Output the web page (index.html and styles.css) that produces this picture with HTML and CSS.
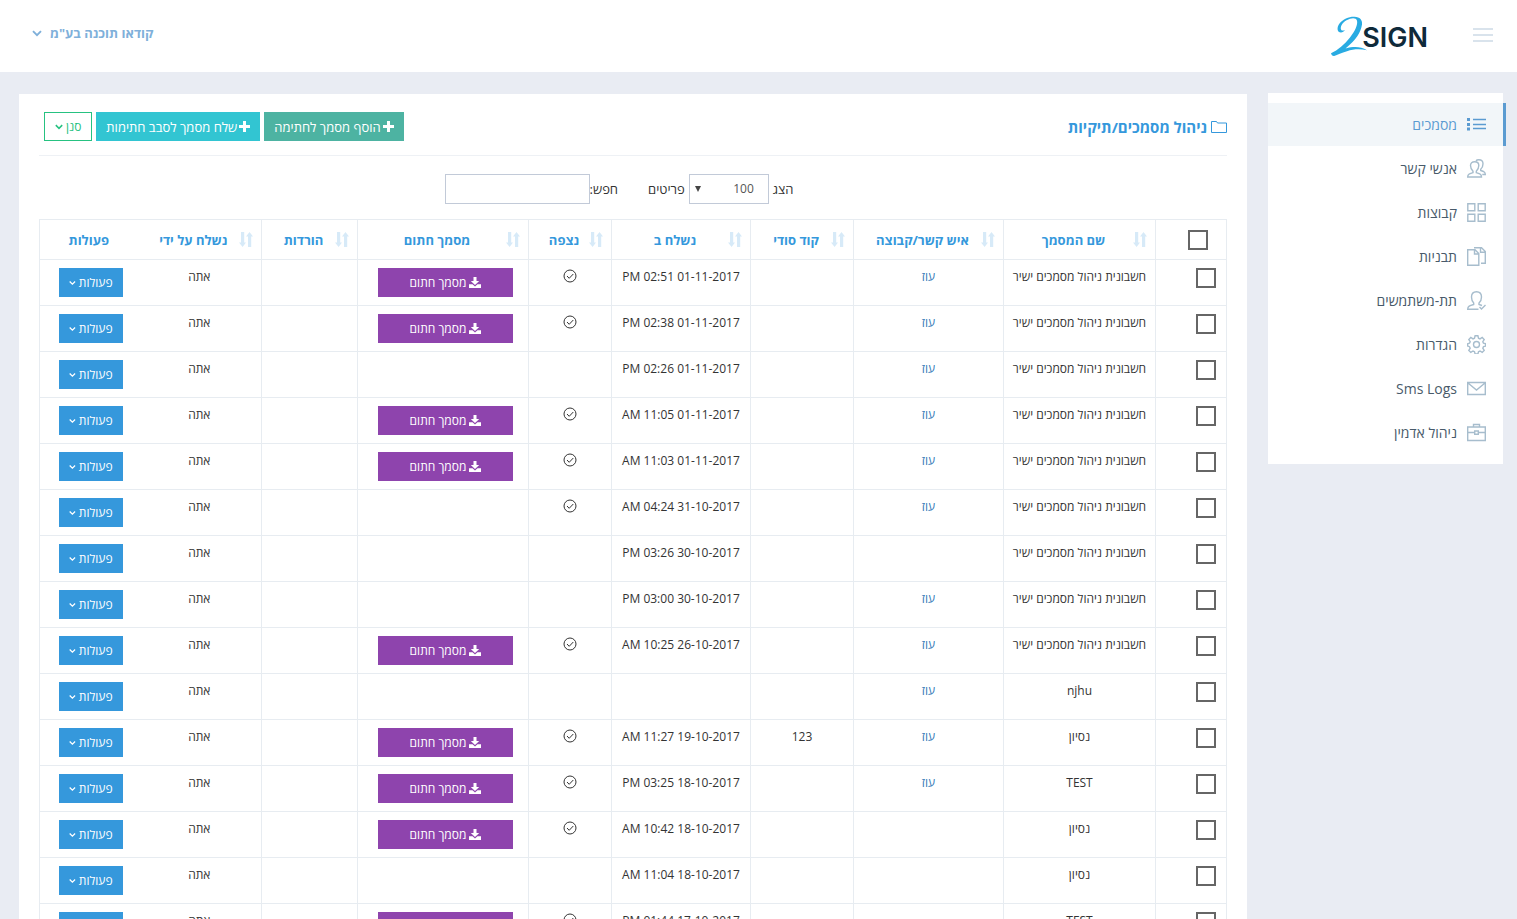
FILE: index.html
```html
<!DOCTYPE html>
<html lang="he" dir="rtl">
<head>
<meta charset="utf-8">
<title>2SIGN</title>
<link rel="stylesheet" href="styles.css">
</head>
<body>
<svg class="sprite" aria-hidden="true">
  <symbol id="i-sort" viewBox="0 0 14 15"><path d="M2 0h3.200v10.500H7L3.600 15 0 10.500h2zM9 15h3.200V4.500H14L10.500 0 7 4.500h2z"/></symbol>
  <symbol id="i-chev" viewBox="0 0 10 7"><path d="M1 1.200 5 5.200l4-4" fill="none" stroke="currentColor" stroke-width="1.900"/></symbol>
  <symbol id="i-plus" viewBox="0 0 11 11"><path d="M4 0h3v4h4v3H7v4H4V7H0V4h4z"/></symbol>
  <symbol id="i-down" viewBox="0 0 12 11"><path d="M4.500 0h3v4h2.700L6 8 1.800 4h2.700zM0 7.200h3.500L6 9.500l2.500-2.300H12V11H0z"/></symbol>
  <symbol id="i-check" viewBox="0 0 14 14"><g fill="none" stroke="currentColor"><circle cx="7" cy="7" r="6"/><path d="m4 7 2.200 2.300L10.300 5"/></g></symbol>
</svg>

<header class="topbar">
  <div class="brand">
    <button class="burger" type="button" aria-label="תפריט"><span></span><span></span><span></span></button>
    <a class="logo" href="#" aria-label="2SIGN">
      <svg width="98" height="42" viewBox="0 0 98 42">
        <path fill="#29abe2" d="M11 17.500C7 17.500 6.500 12.500 9.500 8.500 13 4 19 1.500 24.500 1.700c5.500.2 8 3.300 7.500 7.800C31 17 26 25 15.500 33.500c8-2 15-2.200 21.500 1.700-7-1.600-13.500-1.300-20 1C11.500 38 7.500 39.500 4.200 41 2.500 41.200 1.300 40 1 38.300 8 35 14.500 29.500 20 22.500 25 16 28 9.500 27 5.700 26 2.500 21.500 2.500 16.500 5.300 12 8 9.500 12.500 11.500 15.300c1 .5 2.200.2 3.500-.3-1 1.500-2.500 2.500-4 2.500z"/>
        <text class="logo-text" x="98" y="32" direction="ltr" text-anchor="end">SIGN</text>
      </svg>
    </a>
  </div>
  <button class="user" type="button">קודאו תוכנה בע"מ<svg width="10" height="7"><use href="#i-chev"/></svg></button>
</header>

<div class="page">
  <nav class="sidebar">
    <a class="item active" href="#"><svg viewBox="0 0 19 19"><path d="M6 4.500h13M6 9.500h13M6 13.500h13"/><path class="solid" d="M0 3h3v3H0zM0 8h3v3H0zM0 12.500h3v3H0z"/></svg>מסמכים</a>
    <a class="item" href="#"><svg viewBox="0 0 19 19"><path d="M.7 18c0-3 1.800-3.300 5.300-4.300v-1.500C4.300 10.500 3.500 9 3.500 6.500 3.500 4 5 2.800 7.700 2.800s4.100 1.200 4.100 3.700c0 2.500-.8 4-2.500 5.700v1.500c3.500 1 5.200 1.300 5.200 4.300zM9 1.800C9.500 1 10.500.7 11.800.7c2.700 0 4.200 1.500 4.200 4 0 2.300-.6 4-2.300 5.500v1.300c3.300 1 4.600 1.500 4.600 4h-3"/></svg>אנשי קשר</a>
    <a class="item" href="#"><svg viewBox="0 0 19 19"><path d="M.8.800h7v7h-7zM11.200.800h7v7h-7zM.8 11.200h7v7h-7zM11.200 11.200h7v7h-7z"/></svg>קבוצות</a>
    <a class="item" href="#"><svg viewBox="0 0 19 19"><path d="M.7 2.700h7.300L11.800 6.500v11.800H.7zM7.500 2.700v4.300h4.300M7 .7h7.500L18.300 4.500v11.800h-4.300M13.500.7v4.600h4.800"/></svg>תבניות</a>
    <a class="item" href="#"><svg viewBox="0 0 19 19"><path d="M11.500 18.300H.7c0-3 2-3.700 6-4.800v-1.500C5 10.300 4.500 8.500 4.500 6c0-3.400 1.800-5.300 5-5.300s5 1.900 5 5.300c0 2.500-.5 4.300-2.500 6v1.500l3 1M12.500 16l2 2 4-4"/></svg>תת-משתמשים</a>
    <a class="item" href="#"><svg viewBox="0 0 19 19"><circle cx="9.500" cy="9.500" r="3"/><path d="m8.100.8h2.800l.6 2.400 1.500.7 2.200-1.400 2 2-1.400 2.200.7 1.500 2.100.5v2.400l-2.100.6-.7 1.500 1.400 2.200-2 2-2.200-1.400-1.500.7-.6 2.200H8.100l-.6-2.200-1.500-.7-2.200 1.400-2-2 1.400-2.200-.7-1.500L.7 11.100V8.700l1.800-.5.7-1.500-1.400-2.200 2-2L6 3.900l1.500-.7z"/></svg>הגדרות</a>
    <a class="item" href="#"><svg viewBox="0 0 19 19"><path d="M.7 3.500h17.600v12H.7zM1 4l8.500 7L18 4"/></svg>Sms Logs</a>
    <a class="item" href="#"><svg viewBox="0 0 19 19"><path d="M.7 4h17.600v13.500H.7zM6.500 4V1.500h6V4M.7 9.500h7M11.300 9.500h7M7.700 8h3.600v3.200H7.700z"/></svg>ניהול אדמין</a>
  </nav>

  <main class="card">
    <div class="card-head">
      <h1 class="title"><svg width="16" height="12" viewBox="0 0 16 12"><path d="M.5.500h5l1 1.500h9v9.500H.5z" fill="none" stroke="currentColor"/></svg>ניהול מסמכים/תיקיות</h1>
      <div class="actions">
        <button class="btn wide green" type="button"><svg width="11" height="11"><use href="#i-plus"/></svg>הוסף מסמך לחתימה</button>
        <button class="btn wide cyan" type="button"><svg width="11" height="11"><use href="#i-plus"/></svg>שלח מסמך לסבב חתימות</button>
        <button class="btn outline" type="button">סנן<svg width="8" height="6"><use href="#i-chev"/></svg></button>
      </div>
    </div>

    <div class="filters">
      <label for="len">הצג</label>
      <span class="select"><select id="len"><option>100</option></select></span>
      <label for="len">פריטים</label>
      <label class="search-label" for="q">חפש:</label>
      <input class="search" id="q" type="text">
    </div>

    <table class="grid">
      <colgroup><col class="c-check"><col class="c-name"><col class="c-contact"><col class="c-code"><col class="c-sent"><col class="c-seen"><col class="c-signed"><col class="c-down"><col class="c-by"><col class="c-act"></colgroup>
      <thead>
        <tr>
          <th class="all"><input type="checkbox" aria-label="בחר הכל"></th>
          <th><div class="sort"><svg><use href="#i-sort"/></svg><span>שם המסמך</span></div></th>
          <th><div class="sort"><svg><use href="#i-sort"/></svg><span>איש קשר/קבוצה</span></div></th>
          <th><div class="sort"><svg><use href="#i-sort"/></svg><span>קוד סודי</span></div></th>
          <th><div class="sort"><svg><use href="#i-sort"/></svg><span>נשלח ב</span></div></th>
          <th><div class="sort"><svg><use href="#i-sort"/></svg><span>נצפה</span></div></th>
          <th><div class="sort"><svg><use href="#i-sort"/></svg><span>מסמך חתום</span></div></th>
          <th><div class="sort"><svg><use href="#i-sort"/></svg><span>הורדות</span></div></th>
          <th class="by"><div class="sort"><svg><use href="#i-sort"/></svg><span>נשלח על ידי</span></div></th>
          <th class="act">פעולות</th>
        </tr>
      </thead>
      <tbody>
        <tr><td class="check"><input type="checkbox" aria-label="בחר"></td><td>חשבונית ניהול מסמכים ישיר</td><td><a href="#">עוז</a></td><td></td><td>01-11-2017 02:51 PM</td><td><svg class="seen"><use href="#i-check"/></svg></td><td class="cell-btn"><button class="btn purple" type="button"><svg width="12" height="11"><use href="#i-down"/></svg>מסמך חתום</button></td><td></td><td class="by">אתה</td><td class="act cell-btn"><button class="btn blue" type="button">פעולות<svg width="8" height="6"><use href="#i-chev"/></svg></button></td></tr>
        <tr><td class="check"><input type="checkbox" aria-label="בחר"></td><td>חשבונית ניהול מסמכים ישיר</td><td><a href="#">עוז</a></td><td></td><td>01-11-2017 02:38 PM</td><td><svg class="seen"><use href="#i-check"/></svg></td><td class="cell-btn"><button class="btn purple" type="button"><svg width="12" height="11"><use href="#i-down"/></svg>מסמך חתום</button></td><td></td><td class="by">אתה</td><td class="act cell-btn"><button class="btn blue" type="button">פעולות<svg width="8" height="6"><use href="#i-chev"/></svg></button></td></tr>
        <tr><td class="check"><input type="checkbox" aria-label="בחר"></td><td>חשבונית ניהול מסמכים ישיר</td><td><a href="#">עוז</a></td><td></td><td>01-11-2017 02:26 PM</td><td></td><td></td><td></td><td class="by">אתה</td><td class="act cell-btn"><button class="btn blue" type="button">פעולות<svg width="8" height="6"><use href="#i-chev"/></svg></button></td></tr>
        <tr><td class="check"><input type="checkbox" aria-label="בחר"></td><td>חשבונית ניהול מסמכים ישיר</td><td><a href="#">עוז</a></td><td></td><td>01-11-2017 11:05 AM</td><td><svg class="seen"><use href="#i-check"/></svg></td><td class="cell-btn"><button class="btn purple" type="button"><svg width="12" height="11"><use href="#i-down"/></svg>מסמך חתום</button></td><td></td><td class="by">אתה</td><td class="act cell-btn"><button class="btn blue" type="button">פעולות<svg width="8" height="6"><use href="#i-chev"/></svg></button></td></tr>
        <tr><td class="check"><input type="checkbox" aria-label="בחר"></td><td>חשבונית ניהול מסמכים ישיר</td><td><a href="#">עוז</a></td><td></td><td>01-11-2017 11:03 AM</td><td><svg class="seen"><use href="#i-check"/></svg></td><td class="cell-btn"><button class="btn purple" type="button"><svg width="12" height="11"><use href="#i-down"/></svg>מסמך חתום</button></td><td></td><td class="by">אתה</td><td class="act cell-btn"><button class="btn blue" type="button">פעולות<svg width="8" height="6"><use href="#i-chev"/></svg></button></td></tr>
        <tr><td class="check"><input type="checkbox" aria-label="בחר"></td><td>חשבונית ניהול מסמכים ישיר</td><td><a href="#">עוז</a></td><td></td><td>31-10-2017 04:24 AM</td><td><svg class="seen"><use href="#i-check"/></svg></td><td></td><td></td><td class="by">אתה</td><td class="act cell-btn"><button class="btn blue" type="button">פעולות<svg width="8" height="6"><use href="#i-chev"/></svg></button></td></tr>
        <tr><td class="check"><input type="checkbox" aria-label="בחר"></td><td>חשבונית ניהול מסמכים ישיר</td><td></td><td></td><td>30-10-2017 03:26 PM</td><td></td><td></td><td></td><td class="by">אתה</td><td class="act cell-btn"><button class="btn blue" type="button">פעולות<svg width="8" height="6"><use href="#i-chev"/></svg></button></td></tr>
        <tr><td class="check"><input type="checkbox" aria-label="בחר"></td><td>חשבונית ניהול מסמכים ישיר</td><td><a href="#">עוז</a></td><td></td><td>30-10-2017 03:00 PM</td><td></td><td></td><td></td><td class="by">אתה</td><td class="act cell-btn"><button class="btn blue" type="button">פעולות<svg width="8" height="6"><use href="#i-chev"/></svg></button></td></tr>
        <tr><td class="check"><input type="checkbox" aria-label="בחר"></td><td>חשבונית ניהול מסמכים ישיר</td><td><a href="#">עוז</a></td><td></td><td>26-10-2017 10:25 AM</td><td><svg class="seen"><use href="#i-check"/></svg></td><td class="cell-btn"><button class="btn purple" type="button"><svg width="12" height="11"><use href="#i-down"/></svg>מסמך חתום</button></td><td></td><td class="by">אתה</td><td class="act cell-btn"><button class="btn blue" type="button">פעולות<svg width="8" height="6"><use href="#i-chev"/></svg></button></td></tr>
        <tr><td class="check"><input type="checkbox" aria-label="בחר"></td><td>njhu</td><td><a href="#">עוז</a></td><td></td><td></td><td></td><td></td><td></td><td class="by">אתה</td><td class="act cell-btn"><button class="btn blue" type="button">פעולות<svg width="8" height="6"><use href="#i-chev"/></svg></button></td></tr>
        <tr><td class="check"><input type="checkbox" aria-label="בחר"></td><td>נסיון</td><td><a href="#">עוז</a></td><td>123</td><td>19-10-2017 11:27 AM</td><td><svg class="seen"><use href="#i-check"/></svg></td><td class="cell-btn"><button class="btn purple" type="button"><svg width="12" height="11"><use href="#i-down"/></svg>מסמך חתום</button></td><td></td><td class="by">אתה</td><td class="act cell-btn"><button class="btn blue" type="button">פעולות<svg width="8" height="6"><use href="#i-chev"/></svg></button></td></tr>
        <tr><td class="check"><input type="checkbox" aria-label="בחר"></td><td>TEST</td><td><a href="#">עוז</a></td><td></td><td>18-10-2017 03:25 PM</td><td><svg class="seen"><use href="#i-check"/></svg></td><td class="cell-btn"><button class="btn purple" type="button"><svg width="12" height="11"><use href="#i-down"/></svg>מסמך חתום</button></td><td></td><td class="by">אתה</td><td class="act cell-btn"><button class="btn blue" type="button">פעולות<svg width="8" height="6"><use href="#i-chev"/></svg></button></td></tr>
        <tr><td class="check"><input type="checkbox" aria-label="בחר"></td><td>נסיון</td><td></td><td></td><td>18-10-2017 10:42 AM</td><td><svg class="seen"><use href="#i-check"/></svg></td><td class="cell-btn"><button class="btn purple" type="button"><svg width="12" height="11"><use href="#i-down"/></svg>מסמך חתום</button></td><td></td><td class="by">אתה</td><td class="act cell-btn"><button class="btn blue" type="button">פעולות<svg width="8" height="6"><use href="#i-chev"/></svg></button></td></tr>
        <tr><td class="check"><input type="checkbox" aria-label="בחר"></td><td>נסיון</td><td></td><td></td><td>18-10-2017 11:04 AM</td><td></td><td></td><td></td><td class="by">אתה</td><td class="act cell-btn"><button class="btn blue" type="button">פעולות<svg width="8" height="6"><use href="#i-chev"/></svg></button></td></tr>
        <tr><td class="check"><input type="checkbox" aria-label="בחר"></td><td>TEST</td><td></td><td></td><td>17-10-2017 01:44 PM</td><td><svg class="seen"><use href="#i-check"/></svg></td><td class="cell-btn"><button class="btn purple" type="button"><svg width="12" height="11"><use href="#i-down"/></svg>מסמך חתום</button></td><td></td><td class="by">אתה</td><td class="act cell-btn"><button class="btn blue" type="button">פעולות<svg width="8" height="6"><use href="#i-chev"/></svg></button></td></tr>
      </tbody>
    </table>
  </main>
</div>
</body>
</html>
```
FILE: styles.css
```css
* { box-sizing: border-box; }

body {
  margin: 0;
  height: 100vh;
  overflow: hidden;
  background: #e9ecf3;
  color: #333;
  font: 12px/18px "Open Sans", "Noto Sans", sans-serif;
}

a { color: #337ab7; text-decoration: none; }
button, input, select { font: inherit; }
button { cursor: pointer; }

.sprite { display: none; }

/* Top bar */
.topbar {
  display: flex;
  justify-content: space-between;
  align-items: flex-start;
  height: 72px;
  padding: 0 24px 0 32px;
  background: #fff;
}

.brand { display: flex; gap: 45px; padding-top: 15px; }

.burger {
  display: flex;
  flex-direction: column;
  gap: 4px;
  width: 20px;
  margin-top: 13px;
  padding: 0;
  border: 0;
  background: none;
}
.burger span { width: 20px; height: 2px; background: #d9e3ec; }

.logo svg { display: block; }
.logo-text { font: 600 27px Inter, "Liberation Sans", sans-serif; fill: #0f2a3a; }

.user {
  display: flex;
  align-items: center;
  gap: 8px;
  margin-top: 24px;
  padding: 0;
  border: 0;
  background: none;
  color: #7fb0da;
  font-size: 13px;
  font-weight: 700;
  line-height: 18px;
}

/* Page columns */
.page {
  display: flex;
  align-items: flex-start;
  gap: 21px;
  padding: 21px 14px 0 19px;
}

.sidebar {
  flex: 0 0 235px;
  padding: 10px 0 9px;
  background: #fff;
}

.item {
  display: flex;
  align-items: center;
  gap: 10px;
  height: 43px;
  margin-bottom: 1px;
  padding-right: 17px;
  color: #485a6a;
  font-size: 14px;
}
.item svg {
  width: 19px;
  height: 19px;
  fill: none;
  stroke: #a7bdcd;
  stroke-width: 1.4;
}
.item .solid { fill: #5b9bd1; stroke: none; }
.item.active {
  margin-right: -3px;
  border-right: 3px solid #5b9bd1;
  background: #f2f6f9;
  color: #5b9bd1;
}
.item.active svg { stroke: #5b9bd1; }

.card {
  flex: 1;
  min-width: 0;
  margin-top: 1px;
  padding: 12px 20px 20px;
  background: #fff;
}

.card-head {
  display: flex;
  justify-content: space-between;
  align-items: center;
  height: 50px;
  padding-bottom: 8px;
  padding-left: 5px;
  border-bottom: 1px solid #eef1f5;
  margin-bottom: 18px;
}

.title {
  display: flex;
  align-items: center;
  gap: 4px;
  margin: 0;
  color: #3598dc;
  font-size: 15px;
  font-weight: 700;
}

.actions { display: flex; gap: 4px; }

.btn {
  display: flex;
  align-items: center;
  justify-content: center;
  gap: 3px;
  height: 29px;
  padding: 0 10px;
  border: 0;
  color: #fff;
  line-height: 18px;
  white-space: nowrap;
}
.btn svg { fill: currentColor; }
.wide { gap: 2px; font-size: 13px; }
.green { background: #4db3a2; }
.cyan { background: #32c5d2; }
.blue { background: #3598dc; }
.purple { background: #8e44ad; }
.outline { border: 1px solid #26c281; background: #fff; color: #26c281; }

/* Table controls */
.filters {
  display: flex;
  justify-content: center;
  align-items: center;
  padding-right: 28px;
  margin-bottom: 15px;
  font-size: 13px;
}
.select { position: relative; margin: 0 4px; }
.select::after {
  content: "";
  position: absolute;
  left: 6px;
  top: 12px;
  border: 3px solid transparent;
  border-top: 6px solid #444;
  border-bottom: 0;
}
.select select {
  display: block;
  width: 80px;
  height: 30px;
  padding: 0 14px;
  border: 1px solid #c2cad8;
  border-radius: 0;
  background: #fff;
  color: #555;
  font-size: 12px;
  appearance: none;
}
.search-label { margin-right: 30px; }
.search { width: 145px; height: 30px; border: 1px solid #c2cad8; background: #fff; }

/* Documents table */
.grid {
  width: 100%;
  table-layout: fixed;
  border-collapse: collapse;
  text-align: center;
}
.c-check { width: 71px; }
.c-name { width: 152px; }
.c-contact { width: 150px; }
.c-code { width: 103px; }
.c-sent { width: 139px; }
.c-seen { width: 83px; }
.c-signed { width: 171px; }
.c-down { width: 96px; }
.c-by { width: 124px; }
.c-act { width: 98px; }

.grid th, .grid td { border: 1px solid #e7ecf1; padding: 0; }
.grid .by { border-left: 0; }
.grid .act { border-right: 0; }

.grid th { height: 40px; color: #3598dc; font-size: 13px; font-weight: 700; white-space: nowrap; }
.sort { display: flex; align-items: center; padding: 0 8px 0 10px; }
.sort svg { width: 14px; height: 15px; fill: #d7eaf8; }
.sort span { flex: 1; }

.grid td { height: 46px; padding: 8px 0; vertical-align: top; white-space: nowrap; }
.grid .cell-btn { padding: 8px 15px 8px 20px; }
.grid .act.cell-btn { padding-left: 19px; }
.cell-btn .btn { width: 100%; }

.grid .all { padding-right: 18px; }
.grid .check { padding-right: 10px; }
.grid input {
  display: block;
  width: 20px;
  height: 20px;
  margin: 0;
  border: 2px solid #666;
  background: #fff;
  appearance: none;
}
.seen { display: block; width: 14px; height: 14px; margin: 1px auto; }
```
